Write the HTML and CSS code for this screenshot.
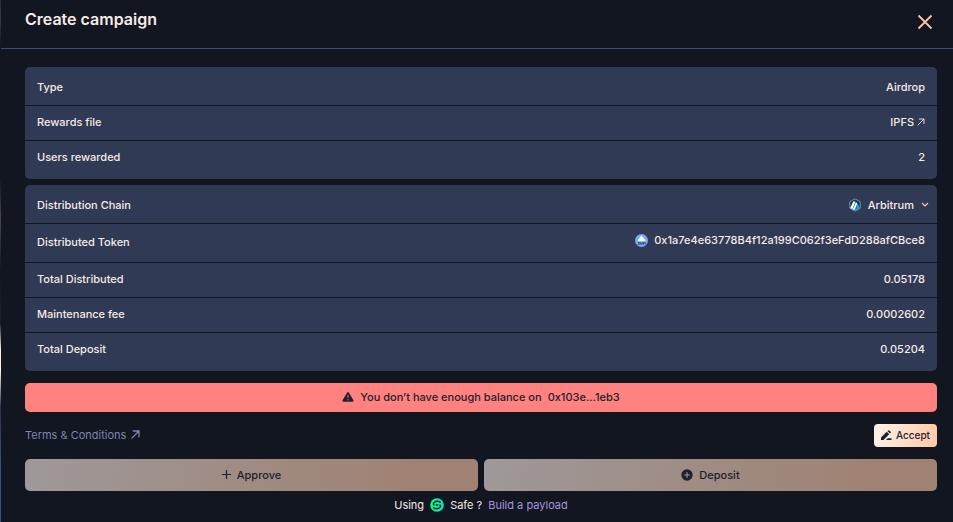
FILE: index.html
```html
<!DOCTYPE html>
<html lang="en">
<head>
<meta charset="utf-8">
<title>Create campaign</title>
<meta name="viewport" content="width=device-width, initial-scale=1">
<link rel="stylesheet" href="styles.css">
</head>
<body>
<div class="modal">
  <header class="header">
    <h1 class="title">Create campaign</h1>
    <button class="close" type="button" aria-label="Close">
      <svg width="16" height="16" viewBox="0 0 16 16" fill="none" stroke="currentColor" stroke-width="1.8"><path d="M1.5 1.5l13 13M14.5 1.5l-13 13"/></svg>
    </button>
  </header>
  <main class="content">
    <dl class="card">
      <div class="row"><dt>Type</dt><dd>Airdrop</dd></div>
      <div class="row"><dt>Rewards file</dt><dd><a class="file" href="#">IPFS
        <svg width="8" height="8" viewBox="0 0 8 8" fill="none" stroke="currentColor" stroke-width=".9"><path d="M.7 7.3L7 1M2 1h5v5"/></svg></a></dd></div>
      <div class="row"><dt>Users rewarded</dt><dd>2</dd></div>
    </dl>
    <dl class="card">
      <div class="row"><dt>Distribution Chain</dt><dd>
        <button class="chain" type="button">
          <svg width="12" height="14" viewBox="0 0 12 14"><path d="M6 .8l5.2 3v6.4L6 13.2l-5.2-3V3.8z" fill="#213147" stroke="#7fb3d6" stroke-width=".8"/><path d="M4.3 3.6h2.2L3.3 11.3l-2-1.2zM7 3.9l1.3 1.9-2.7 6.3-2-.5z" fill="#fff"/><path d="M8.5 5.6l2.3 4.5-2 1.5-1.7-2.8zM6.9 9.2l1.5 2.6-1.9.9-.7-1z" fill="#12aaff"/></svg>
          Arbitrum
          <svg class="chevron" width="8" height="6" viewBox="0 0 8 6" fill="none" stroke="currentColor" stroke-width="1.2"><path d="M1 1l3 3 3-3"/></svg>
        </button></dd></div>
      <div class="row row-token"><dt>Distributed Token</dt><dd class="token">
        <svg width="13" height="13" viewBox="0 0 13 13"><circle cx="6.5" cy="6.5" r="6.5" fill="#74a9f6"/><path d="M6.5 1.8l1.8 1.7.2 1 1.7.9.2 1.9H2.8L3 5.4l1.5-.9.2-1z" fill="#fff"/><path d="M3 8.4h1.6L3.2 10.3h1.4M5.6 8.2v2h1.6v-2M8.4 10.5v-2h1.7v2" fill="none" stroke="#273960" stroke-width=".8"/></svg>
        0x1a7e4e63778B4f12a199C062f3eFdD288afCBce8</dd></div>
      <div class="row"><dt>Total Distributed</dt><dd>0.05178</dd></div>
      <div class="row"><dt>Maintenance fee</dt><dd>0.0002602</dd></div>
      <div class="row"><dt>Total Deposit</dt><dd>0.05204</dd></div>
    </dl>
    <div class="alert" role="alert">
      <svg width="12" height="10" viewBox="0 0 12 10"><path d="M5.1.7Q6-.6 6.9.7l4.4 7.4Q12 9.7 10.5 9.8h-9Q0 9.7.7 8.1z" fill="currentColor"/><path d="M6 3.2v2.6M6 7.1v1.2" stroke="#ff827f" stroke-width="1"/></svg>
      <span>You don’t have enough balance on</span><span>0x103e...1eb3</span>
    </div>
    <div class="terms">
      <a class="terms-link" href="#">Terms &amp; Conditions
        <svg width="9" height="9" viewBox="0 0 9 9" fill="none" stroke="currentColor" stroke-width="1.3"><path d="M.6 8.4L8 1M1.8 1H8v6.2"/></svg></a>
      <button class="accept" type="button">
        <svg width="11" height="11" viewBox="0 0 11 11" fill="currentColor"><path d="M0 10V7.5L5.7 1.8l2.5 2.5L2.5 10zM6.4 1.1L7.1.4q.6-.5 1.2 0l1.3 1.3q.5.6 0 1.2l-.7.7zM5 10l1.8-1.8h3.7V10z"/></svg>
        Accept
      </button>
    </div>
    <div class="actions">
      <button class="action" type="button" disabled>
        <svg width="9" height="9" viewBox="0 0 9 9" stroke="currentColor" stroke-width="1.2"><path d="M4.5 0v9M0 4.5h9"/></svg>
        Approve
      </button>
      <button class="action" type="button" disabled>
        <svg width="12" height="12" viewBox="0 0 12 12"><circle cx="6" cy="6" r="5.7" fill="currentColor"/><path d="M6 3.2v5.6M3.2 6h5.6" stroke="#a18e86" stroke-width="1.2"/></svg>
        Deposit
      </button>
    </div>
    <p class="safe">Using
      <svg width="14" height="14" viewBox="0 0 14 14"><defs><linearGradient id="safe" x1="0" x2="1"><stop stop-color="#00ff80"/><stop offset="1" stop-color="#08e5c7"/></linearGradient></defs><circle cx="7" cy="7" r="6.8" fill="url(#safe)"/><path d="M10.8 4.6C9.4 3 6 2.7 4.2 4.5c-1.3 1.3-.9 2.4.3 2.5M3.2 9.4c1.4 1.6 4.8 1.9 6.6.1 1.3-1.3.9-2.4-.3-2.5" fill="none" stroke="#121620" stroke-width="1.4"/><path d="M5.8 7h2.4" stroke="#121620" stroke-width="1.5"/></svg>
      Safe ? <a class="payload" href="#">Build a payload</a></p>
  </main>
</div>
</body>
</html>
```
FILE: styles.css
```css
* { box-sizing: border-box; }

body {
  margin: 0;
  background: #121620;
  color: #f6ebe5;
  font: 500 11px/16px Inter, sans-serif;
}

.modal {
  min-height: 100vh;
  border-left: 1px solid;
  border-image: linear-gradient(#2b303d 0, #333946 4%, #121620 9%, #121620 34%, #4a464c 42%, #121620 52%, #1c202b 62%, #fff0df 67%, #fff0df 71%, #27324c 78%, #3d4d7c 88%) 1;
}

svg { display: block; flex: none; }
button { font: inherit; cursor: pointer; }
a { text-decoration: none; }

.header {
  display: flex;
  align-items: center;
  justify-content: space-between;
  height: 49px;
  padding: 0 20px 10px 24px;
  border-bottom: 1px solid #3f4d7b;
}

.title { margin: 0; font-size: 16px; line-height: 24px; font-weight: 600; }
.close { padding: 6px 0 0; border: 0; background: none; color: #ffc5a5; }

.content {
  display: flex;
  flex-direction: column;
  gap: 12px;
  padding: 18px 16px 8px 24px;
}

.card {
  margin: 0;
  padding: 4px 0;
  border-radius: 5px;
  background: #303a54;
}
.card + .card { margin-top: -6px; }

.row {
  display: flex;
  align-items: center;
  justify-content: space-between;
  min-height: 34px;
  padding: 0 12px 2px;
}
.row + .row { border-top: 1px solid #121620; min-height: 35px; }
.row + .row-token { min-height: 39px; }

dt, dd { margin: 0; }
.file, .chain, .token { display: flex; align-items: center; }
.file { gap: 3px; color: inherit; }
.chain { gap: 7px; padding: 0; margin-right: -4px; border: 0; background: none; color: inherit; }
.chevron { color: #ffc5a5; }
.token { gap: 6px; padding-bottom: 4px; }

.alert {
  display: flex;
  align-items: center;
  justify-content: center;
  gap: 6px;
  min-height: 29px;
  padding-bottom: 2px;
  border-radius: 5px;
  background: #ff827f;
  color: #1c2130;
}

.terms { display: flex; align-items: center; justify-content: space-between; }
.terms-link { display: flex; align-items: center; gap: 5px; padding-bottom: 2px; color: #7987b1; font-weight: 400; }

.accept {
  display: flex;
  align-items: center;
  gap: 4px;
  height: 23px;
  padding: 0 7px 1px;
  border: 0;
  border-radius: 4px;
  background: linear-gradient(100deg, #fff2e9, #ffc8a5);
  color: #1c2130;
  font-size: 10px;
}

.actions { display: grid; grid-template-columns: 1fr 1fr; gap: 6px; }

.action {
  display: flex;
  align-items: center;
  justify-content: center;
  gap: 6px;
  height: 32px;
  padding-bottom: 2px;
  border: 0;
  border-radius: 5px;
  background: linear-gradient(100deg, #9e9999, #a08273 85%);
  color: #1c2130;
}

.safe {
  display: flex;
  align-items: center;
  justify-content: center;
  gap: 6px;
  margin: -6px 0 0;
  font-weight: 400;
}
.payload { color: #a397de; }
```
